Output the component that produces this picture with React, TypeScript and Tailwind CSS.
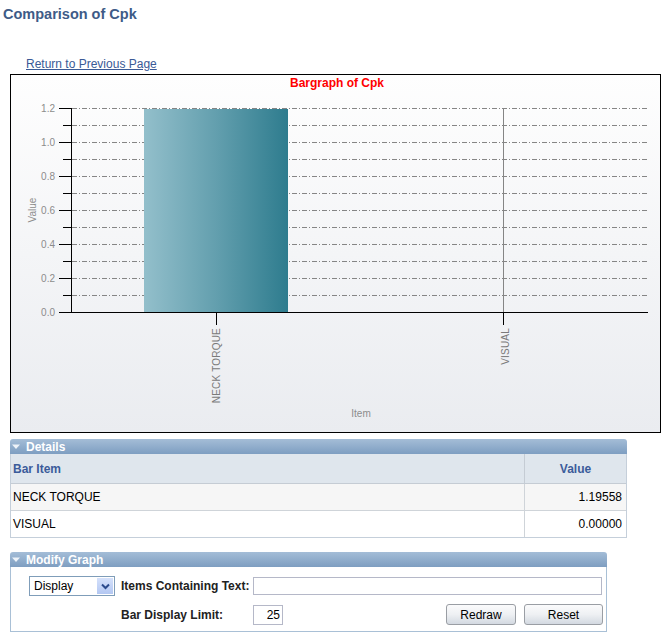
import React from 'react';

const ticks = [1.2, 1.0, 0.8, 0.6, 0.4, 0.2, 0.0];

function BarChart() {
  const grid = Array.from({ length: 12 }, (_, i) => 108 + i * 17);
  return (
    <svg width="649" height="357" viewBox="11 75 649 357" className="block">
      <defs>
        <linearGradient id="bg" x1="0" y1="0" x2="0" y2="1">
          <stop offset="0" stopColor="#fefefe" />
          <stop offset="1" stopColor="#eaecf0" />
        </linearGradient>
        <linearGradient id="bar" x1="0" y1="0" x2="1" y2="0">
          <stop offset="0" stopColor="#93bfcb" />
          <stop offset="0.5" stopColor="#639fae" />
          <stop offset="1" stopColor="#2e7c8e" />
        </linearGradient>
      </defs>
      <rect x="11" y="75" width="649" height="357" fill="url(#bg)" />
      <text x="337" y="87" textAnchor="middle" fontSize="12" fontWeight="bold" fill="#ff0000">
        Bargraph of Cpk
      </text>

      {grid.map((y) => (
        <line key={y} x1="72" x2="648" y1={y + 0.5} y2={y + 0.5} stroke="#858585" strokeDasharray="5 2 1 2" />
      ))}
      {grid.map((y, i) => (
        <line key={'t' + y} x1={i % 2 === 0 ? 59 : 63} x2="72" y1={y + 0.5} y2={y + 0.5} stroke="#000" />
      ))}

      <rect x="144" y="109" width="144" height="203" fill="url(#bar)" />

      <line x1="503.5" x2="503.5" y1="108" y2="312" stroke="#858585" />
      <line x1="71.5" x2="71.5" y1="108" y2="313" stroke="#000" />
      <line x1="59" x2="648" y1="312.5" y2="312.5" stroke="#000" />
      <line x1="216.5" x2="216.5" y1="312" y2="325" stroke="#000" />
      <line x1="503.5" x2="503.5" y1="312" y2="325" stroke="#000" />

      {ticks.map((t, i) => (
        <text key={t} x="55" y={112 + i * 34} textAnchor="end" fontSize="10" fill="#8c8c8c">
          {t.toFixed(1)}
        </text>
      ))}

      <text transform="translate(36 210) rotate(-90)" textAnchor="middle" fontSize="10" fill="#8c8c8c">
        Value
      </text>
      <text transform="translate(220 328) rotate(-90)" textAnchor="end" fontSize="10" letterSpacing="0.2" fill="#7a7a7a">
        NECK TORQUE
      </text>
      <text transform="translate(509 328) rotate(-90)" textAnchor="end" fontSize="10" letterSpacing="0.2" fill="#7a7a7a">
        VISUAL
      </text>
      <text x="361" y="417" textAnchor="middle" fontSize="10" fill="#8c8c8c">
        Item
      </text>
    </svg>
  );
}

function SectionHeader({ title }: { title: string }) {
  return (
    <div className="h-[15px] rounded-t-[3px] bg-linear-to-b from-[#a4bdd7] to-[#7e9ec1] flex items-center pl-[1px]">
      <svg width="11" height="6" viewBox="0 0 11 6" className="mr-[4px]">
        <path d="M1 0.5 L9 0.5 L5 5 Z" fill="#eef3f9" />
      </svg>
      <span className="text-white font-bold text-[12px] leading-none">{title}</span>
    </div>
  );
}

function Button({ label, width }: { label: string; width: string }) {
  return (
    <button
      className={`${width} h-[21px] rounded-[3px] border border-[#9a9ea4] bg-linear-to-b from-[#fbfbfc] via-[#eef0f3] to-[#d3d9e1] text-[12px] text-black leading-none`}
    >
      {label}
    </button>
  );
}

export default function App() {
  return (
    <div className="w-[669px] h-[640px] bg-white overflow-hidden font-['Liberation_Sans',Arial,sans-serif] text-[#333]">
      <h1 className="pl-[3px] pt-[5px] text-[14.5px] leading-[18px] font-bold text-[#3e5b87]">Comparison of Cpk</h1>

      <div className="mt-[33px] pl-[26px] h-[14px] leading-[14px]">
        <a className="text-[12px] text-[#3a5a96] underline">Return to Previous Page</a>
      </div>

      <div className="mt-[4px] ml-[10px] w-[651px] h-[359px] border border-black">
        <BarChart />
      </div>

      <div className="mt-[6px] ml-[10px] w-[617px]">
        <SectionHeader title="Details" />
        <div className="border-x border-b border-[#c5cfda] text-[12px]">
          <div className="flex h-[30px] bg-[#dfe6ed] border-b border-[#c5ccd4] text-[#3b5b9a] font-bold">
            <div className="flex-1 flex items-center pl-[2px]">Bar Item</div>
            <div className="w-[102px] border-l border-[#c5ccd4] flex items-center justify-center">Value</div>
          </div>
          <div className="flex h-[27px] bg-[#f6f6f6] border-b border-[#cfd4d9] text-black">
            <div className="flex-1 flex items-center pl-[2px]">NECK TORQUE</div>
            <div className="w-[102px] border-l border-[#cfd4d9] flex items-center justify-end pr-[4px]">1.19558</div>
          </div>
          <div className="flex h-[26px] bg-white text-black">
            <div className="flex-1 flex items-center pl-[2px]">VISUAL</div>
            <div className="w-[102px] border-l border-[#cfd4d9] flex items-center justify-end pr-[4px]">0.00000</div>
          </div>
        </div>
      </div>

      <div className="mt-[14px] ml-[10px] w-[597px]">
        <SectionHeader title="Modify Graph" />
        <div className="h-[65px] border-x border-b border-[#a9c0d6] pl-[18px] pt-[9px] text-[12px]">
          <div className="grid grid-cols-[92px_132px_1fr] gap-y-[8px] items-center">
            <div className="w-[86px] h-[20px] border border-[#7f9db9] bg-white flex items-center justify-between pl-[4px] pr-[1px]">
              <span className="text-black">Display</span>
              <div className="w-[16px] h-[16px] bg-linear-to-b from-[#d5e1fb] to-[#b3c7f2] flex items-center justify-center">
                <svg width="9" height="7" viewBox="0 0 9 7">
                  <path d="M1 1.5 L4.5 5 L8 1.5" stroke="#2b4a8c" strokeWidth="2" fill="none" />
                </svg>
              </div>
            </div>
            <div className="font-bold text-[#222] leading-none">Items Containing Text:</div>
            <div className="w-[349px] h-[18px] border border-[#b5b8c8] bg-white" />

            <div />
            <div className="font-bold text-[#222] leading-none">Bar Display Limit:</div>
            <div className="flex items-center">
              <div className="w-[30px] h-[20px] border border-[#b5b8c8] bg-white flex items-center justify-end pr-[2px] text-black">
                25
              </div>
              <div className="ml-auto mr-[3px] flex gap-[8px]">
                <Button label="Redraw" width="w-[70px]" />
                <Button label="Reset" width="w-[79px]" />
              </div>
            </div>
          </div>
        </div>
      </div>
    </div>
  );
}
